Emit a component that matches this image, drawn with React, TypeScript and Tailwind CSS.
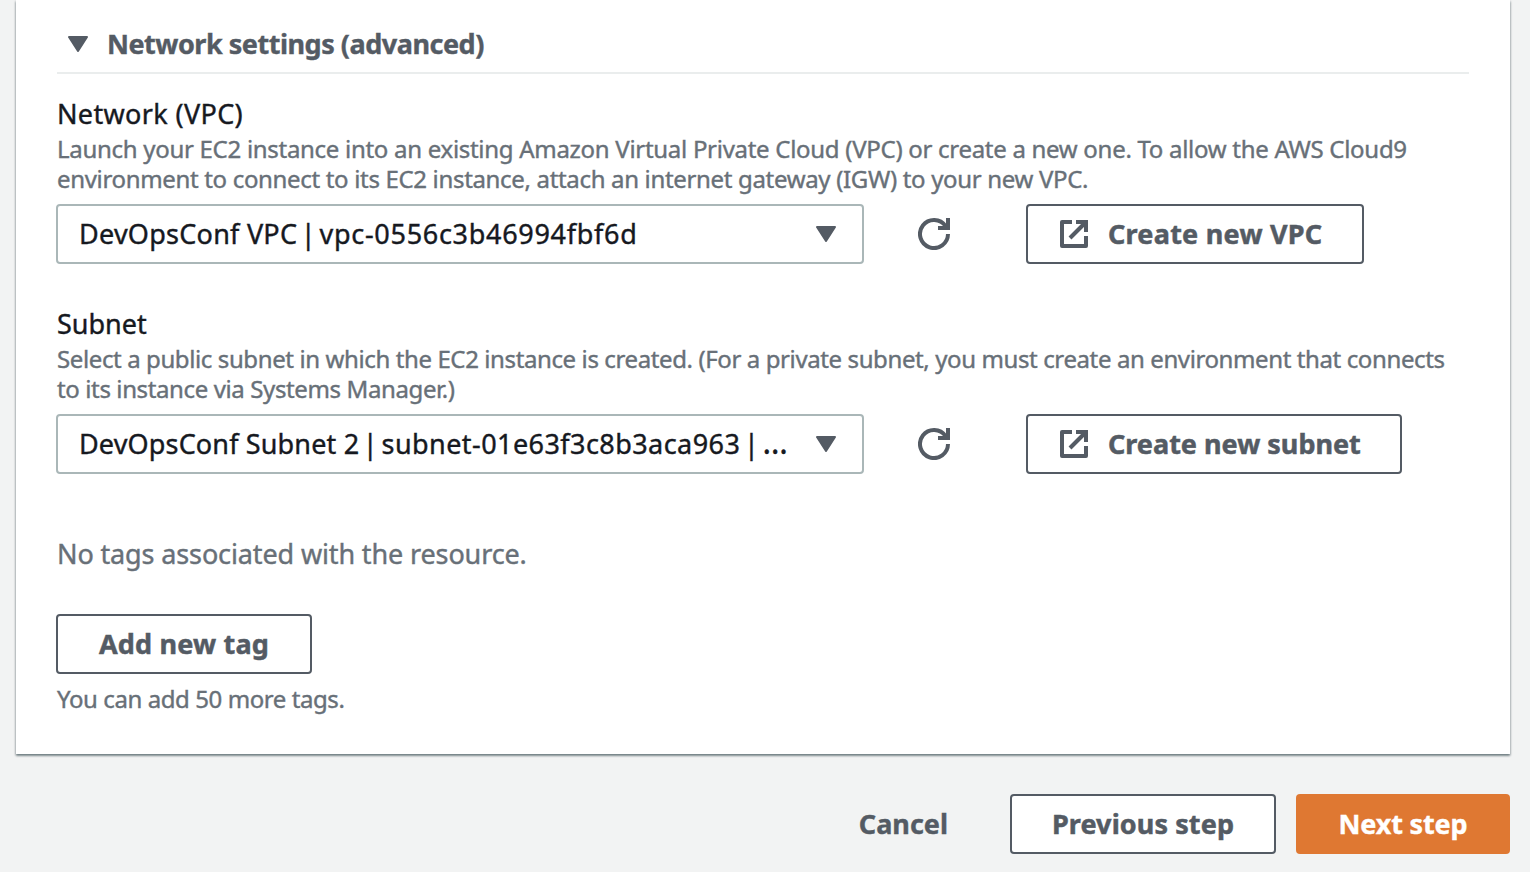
import type { ReactNode } from 'react';

function Caret() {
  return (
    <svg width="20" height="16" viewBox="0 0 20 16" className="shrink-0" aria-hidden="true">
      <path d="M1 1H19L10 15Z" fill="#545b64" stroke="#545b64" strokeWidth="2" strokeLinejoin="round" />
    </svg>
  );
}

function Refresh() {
  return (
    <svg width="32" height="32" viewBox="0 0 32 32" fill="none" stroke="#545b64" strokeWidth="4" aria-hidden="true">
      <path d="M30 16A14 14 0 1 1 27.6 8.2L30 10.5" />
      <path d="M20 10H30V0" />
    </svg>
  );
}

function External() {
  return (
    <svg width="28" height="28" viewBox="0 0 28 28" fill="none" stroke="#545b64" strokeWidth="4" aria-hidden="true">
      <path d="M12 2H2V26H26V16" strokeLinejoin="round" />
      <path d="M16 2H26V12" />
      <path d="M26 2L10 18" />
    </svg>
  );
}

const outlined =
  'flex h-[60px] items-center rounded-[4px] border-2 border-[#545b64] bg-white text-[27px] font-bold whitespace-nowrap text-[#545b64] [-webkit-text-stroke:0.5px_#545b64]';

function Pipe() {
  return (
    <>
      <span className="tracking-[-3.4px]"> |</span>
      <span className="tracking-[0.2px]"> </span>
    </>
  );
}

type FieldProps = {
  label: ReactNode;
  help: ReactNode;
  value: ReactNode;
  action: ReactNode;
  actionClass: string;
};

function Field({ label, help, value, action, actionClass }: FieldProps) {
  return (
    <div className="w-full">
      <div className="h-[35px] text-[27px] leading-[30px] whitespace-nowrap text-[#16191f]">{label}</div>
      <div className="h-[70px] text-[24px] leading-[30px] whitespace-nowrap text-[#687078]">{help}</div>
      <div className="-ml-px flex items-center">
        <button className="flex h-[60px] w-[808px] items-center justify-between rounded-[4px] border-2 border-[#aab7b8] bg-white pr-[26px] pl-[21px] text-[27px] whitespace-pre text-[#16191f] [-webkit-text-stroke:0.4px_#16191f]">
          <span>{value}</span>
          <Caret />
        </button>
        <button className="ml-[54px]" aria-label="Refresh">
          <Refresh />
        </button>
        <button className={`ml-[76px] gap-[20px] pl-8 ${outlined} ${actionClass}`}>
          <External />
          {action}
        </button>
      </div>
    </div>
  );
}

export default function App() {
  return (
    <div className="h-[872px] w-[1530px] overflow-hidden bg-[#f2f3f3] font-['Noto_Sans','Open_Sans',sans-serif] [-webkit-text-stroke:0.4px]">
      <main className="ml-4 h-[754px] w-[1494px] bg-white pr-[41px] pl-[41px] shadow-[0_2px_2px_0_rgba(0,28,36,0.4),1px_1px_2px_0_rgba(0,28,36,0.15),-1px_1px_2px_0_rgba(0,28,36,0.15)]">
        <h2 className="flex h-[74px] items-center gap-[19px] border-b-2 border-[#eaeded] pt-[16px] pl-[11px] text-[27px] font-bold whitespace-nowrap text-[#545b64]">
          <Caret />
          <span className="tracking-[-0.48px]">Network settings (advanced)</span>
        </h2>
        <div className="flex flex-col gap-[45px] pt-[25px]">
          <Field
            label={<span className="tracking-[0.35px]">Network (VPC)</span>}
            help={
              <>
                <span className="tracking-[-0.29px]">
                  Launch your EC2 instance into an existing Amazon Virtual Private Cloud (VPC) or create a new one. To allow the AWS Cloud9
                </span>
                <br />
                <span className="tracking-[-0.33px]">
                  environment to connect to its EC2 instance, attach an internet gateway (IGW) to your new VPC.
                </span>
              </>
            }
            value={
              <>
                <span className="tracking-[0.25px]">DevOpsConf VPC</span>
                <Pipe />
                <span className="tracking-[0.7px]">vpc-0556c3b46994fbf6d</span>
              </>
            }
            action={<span className="tracking-[0.25px]">Create new VPC</span>}
            actionClass="w-[338px]"
          />
          <Field
            label={<span className="tracking-[0px]">Subnet</span>}
            help={
              <>
                <span className="tracking-[-0.39px]">
                  Select a public subnet in which the EC2 instance is created. (For a private subnet, you must create an environment that connects
                </span>
                <br />
                <span className="tracking-[-0.38px]">to its instance via Systems Manager.)</span>
              </>
            }
            value={
              <>
                <span className="tracking-[0.15px]">DevOpsConf Subnet 2</span>
                <Pipe />
                <span className="tracking-[0.43px]">subnet-01e63f3c8b3aca963</span>
                <Pipe />
                <span className="text-[32px] leading-none">…</span>
              </>
            }
            action={<span className="tracking-[0px]">Create new subnet</span>}
            actionClass="w-[376px]"
          />
        </div>
        <p className="mt-[65px] text-[27px] leading-[30px] whitespace-nowrap text-[#687078]">
          <span className="tracking-[-0.13px]">No tags associated with the resource.</span>
        </p>
        <button className={`mt-[45px] -ml-px w-[256px] justify-center ${outlined}`}>
          <span className="tracking-[0.2px]">Add new tag</span>
        </button>
        <p className="mt-[10px] text-[24px] leading-[30px] whitespace-nowrap text-[#687078]">
          <span className="tracking-[-0.42px]">You can add 50 more tags.</span>
        </p>
      </main>
      <footer className="mt-10 flex items-center justify-end pr-5">
        <button className="mr-[62px] text-[27px] font-bold text-[#545b64]">
          <span className="tracking-[0px]">Cancel</span>
        </button>
        <button className={`w-[266px] justify-center ${outlined}`}>
          <span className="tracking-[0.1px]">Previous step</span>
        </button>
        <button className="ml-5 flex h-[60px] w-[214px] items-center justify-center rounded-[4px] bg-[#df7832] text-[27px] font-bold whitespace-nowrap text-white">
          <span className="tracking-[-0.15px]">Next step</span>
        </button>
      </footer>
    </div>
  );
}
